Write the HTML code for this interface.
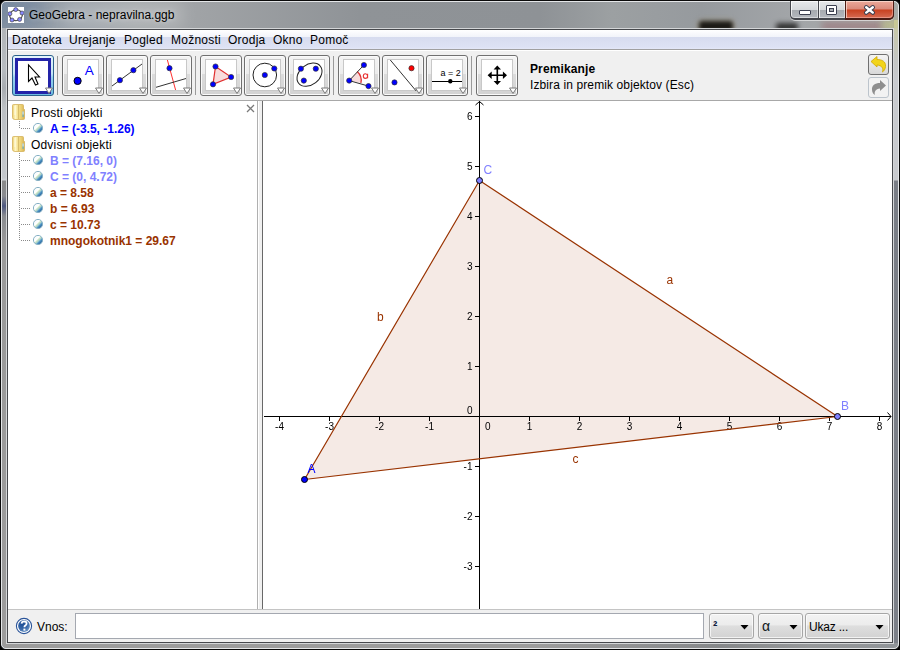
<!DOCTYPE html>
<html><head><meta charset="utf-8">
<style>
*{margin:0;padding:0;box-sizing:border-box}
html,body{width:900px;height:650px;overflow:hidden;background:#000}
body{position:relative;font-family:"Liberation Sans",sans-serif;font-size:12px;color:#000}
.a{position:absolute}
.mi{position:absolute;top:33px;white-space:pre;line-height:14px;color:#000;letter-spacing:.25px}
.t{position:absolute;white-space:pre;line-height:16px}
.btn{position:absolute;top:55px;width:42px;height:41px;border:1px solid #707070;border-radius:3px;
 background:linear-gradient(#f4f4f4 0,#ececec 45%,#dcdcdc 46%,#d2d2d2 100%);box-shadow:inset 0 0 0 1px #fafafa}
.btn svg{position:absolute;left:4px;top:3px}
.sep{position:absolute;top:56px;width:1px;height:39px;background:#9a9a9a}
.cb{position:absolute;top:613px;height:26px;border:1px solid #a6a6a6;border-radius:3px;background:linear-gradient(#f3f3f3 0,#ececec 45%,#dedede 50%,#d2d2d2 100%);box-shadow:inset 0 0 0 1px rgba(255,255,255,.7)}
.row{position:absolute;left:50px;font-weight:bold;white-space:pre;line-height:16px}
</style></head><body>
<!-- window frame -->
<div class="a" style="left:0;top:0;width:900px;height:650px;background:linear-gradient(90deg,#8c98a6 0,#a4a8ab 15%,#a0a3a6 22%,#8f9397 40%,#8e9296 60%,#9ca0a2 68%,#969a9e 78%,#a2a5a8 88%,#a8aaa6 100%);border:1px solid #0a0a0a;border-radius:6px 6px 6px 6px"></div>
<div class="a" style="left:2px;top:28px;width:4px;height:616px;background:linear-gradient(#b0b4b8 0,#b8bcc0 40px,#a8acb0 60px,#bcc0c4 80px,#c4c8cc 150px,#d0d4d8 152px,#8a8a8a 153px,#8a8c90 168px,#4e5880 178px,#8a8c90 188px,#9a9a9a 215px,#9c9c9c 100%)"></div>
<div class="a" style="left:894px;top:20px;width:4px;height:624px;background:linear-gradient(#c8c8a0 0,#c4c6c4 40px,#c8cace 60px,#c8cace 160px,#7a7e86 161px,#7c8088 100%)"></div>
<div class="a" style="left:2px;top:643px;width:896px;height:5px;background:linear-gradient(90deg,#9c9c9c 0,#9c9c9c 60%,#86888a 80%,#96989a 90%,#909498 100%);border-radius:0 0 4px 4px"></div>
<div class="a" style="left:1px;top:1px;width:898px;height:648px;border:1px solid #e4e6e8;border-radius:5px"></div>
<div class="a" style="left:6px;top:28px;width:888px;height:616px;border:1px solid #d4d6d8"></div>
<div class="a" style="left:7px;top:29px;width:886px;height:614px;border:1px solid #46484c;background:#f0f0f0"></div>
<!-- title bar -->
<div class="a" style="left:2px;top:2px;width:896px;height:26px;overflow:hidden;border-radius:4px 4px 0 0">
 <div class="a" style="left:-20px;top:-10px;width:60px;height:36px;background:rgba(90,115,150,.35);filter:blur(8px)"></div>
 <div class="a" style="left:60px;top:2px;width:120px;height:22px;background:rgba(255,255,255,.22);filter:blur(8px)"></div>
 <div class="a" style="left:697px;top:19px;width:34px;height:10px;background:#1c1a16;border-radius:3px;filter:blur(2.2px);box-shadow:0 0 3px 1px rgba(180,150,90,.5)"></div>
 <div class="a" style="left:774px;top:21px;width:22px;height:8px;background:#303030;border-radius:3px;filter:blur(2.5px)"></div>
 <div class="a" style="left:820px;top:20px;width:60px;height:9px;background:rgba(150,90,100,.45);filter:blur(3px)"></div>
 <div class="a" style="left:880px;top:18px;width:16px;height:10px;background:rgba(200,200,120,.5);filter:blur(3px)"></div>
</div>
<div class="a" style="left:8px;top:7px;width:16px;height:16px;background:#fff"></div>
<svg class="a" style="left:8px;top:7px" width="16" height="16" viewBox="0 0 16 16">
 <ellipse cx="8" cy="8.2" rx="6.4" ry="5.4" fill="none" stroke="#555" stroke-width="1.2" transform="rotate(-10 8 8)"/>
 <g fill="#8888ff" stroke="#333" stroke-width=".6">
 <circle cx="7.7" cy="2.6" r="2"/><circle cx="14" cy="6" r="2"/><circle cx="11.6" cy="12.4" r="2"/><circle cx="4" cy="13" r="2"/><circle cx="1.9" cy="6.8" r="2"/></g>
</svg>
<span class="a" style="left:29px;top:8px;line-height:14px;font-size:12px;color:#000;white-space:pre;text-shadow:0 0 5px rgba(255,255,255,.5)">GeoGebra - nepravilna.ggb</span>
<!-- window buttons -->
<div class="a" style="left:790px;top:1px;width:104px;height:19px;background:#44464c;border-radius:0 0 5px 5px;box-shadow:0 1px 0 rgba(255,255,255,.55)"></div>
<div class="a" style="left:791px;top:1px;width:27px;height:17px;border-radius:0 0 0 4px;background:linear-gradient(#e6e8ea 0,#d6d9dc 50%,#a6aaaf 53%,#b4b8be 100%);box-shadow:inset 1px 1px 0 rgba(255,255,255,.75),inset -1px -1px 0 rgba(255,255,255,.45)"></div>
<div class="a" style="left:819px;top:1px;width:26px;height:17px;background:linear-gradient(#e6e8ea 0,#d6d9dc 50%,#a6aaaf 53%,#b4b8be 100%);box-shadow:inset 1px 1px 0 rgba(255,255,255,.75),inset -1px -1px 0 rgba(255,255,255,.45)"></div>
<div class="a" style="left:845px;top:1px;width:49px;height:19px;background:#4c1c14;border-radius:0 0 5px 0"></div>
<div class="a" style="left:846px;top:1px;width:47px;height:17px;border-radius:0 0 4px 0;background:linear-gradient(#eca99a 0,#da8a7a 48%,#c8401f 52%,#d66a52 100%);box-shadow:inset 1px 1px 0 rgba(255,230,220,.7),inset -1px -1px 0 rgba(255,200,190,.45)"></div>
<div class="a" style="left:790px;top:0;width:104px;height:1px;background:#101010"></div>
<div class="a" style="left:799px;top:10px;width:12px;height:5px;background:#fff;border:1px solid #3c4050;border-radius:1px"></div>
<div class="a" style="left:826px;top:5px;width:11px;height:10px;background:#fff;border:1px solid #3c4050;border-radius:1px"></div>
<div class="a" style="left:829px;top:8px;width:5px;height:4px;background:#a8acb0;border:1px solid #3c4050"></div>
<svg class="a" style="left:862px;top:3px" width="15" height="13" viewBox="0 0 15 13">
 <path d="M4.2 4.3 L10.8 9.6 M10.8 4.3 L4.2 9.6" stroke="#3a3f50" stroke-width="4.4" stroke-linecap="round"/>
 <path d="M4.2 4.3 L10.8 9.6 M10.8 4.3 L4.2 9.6" stroke="#fff" stroke-width="2.4" stroke-linecap="round"/>
</svg>

<!-- client: menubar -->
<div class="a" style="left:8px;top:30px;width:884px;height:19px;background:linear-gradient(#ffffff 0,#f2f4fa 35%,#d7dcef 38%,#dde2f4 90%,#e4e8f8 100%)"></div>
<span class="mi" style="left:12px">Datoteka</span>
<span class="mi" style="left:69px">Urejanje</span>
<span class="mi" style="left:124px">Pogled</span>
<span class="mi" style="left:171px">Možnosti</span>
<span class="mi" style="left:228px">Orodja</span>
<span class="mi" style="left:273px">Okno</span>
<span class="mi" style="left:310px">Pomoč</span>
<div class="a" style="left:8px;top:49px;width:884px;height:1px;background:#a0a0a0"></div>
<div class="a" style="left:8px;top:50px;width:884px;height:1px;background:#fff"></div>


<!-- toolbar -->
<div class="a" style="left:12px;top:55px;width:42px;height:41px;border:1px solid #2c628b;border-radius:3px;background:linear-gradient(#e5f4fc 0,#c4e5f6 45%,#98d1ef 55%,#6cbbe0 100%)"></div>
<div class="a" style="left:15px;top:58px;width:36px;height:36px;border:3px solid #2323a8;background:#fff"></div>
<svg class="a" style="left:17px;top:59px" width="32" height="32" viewBox="0 0 32 32">
 <path d="M11.5 6 L11.5 22.5 L15 19 L18.5 26 L21 25 L18 18 L22.5 18 Z" fill="#fff" stroke="#000" stroke-width="1.1" stroke-linejoin="miter"/>
</svg>
<div class="sep" style="left:57px"></div>
<div class="btn" style="left:62px"><svg width="32" height="32" viewBox="0 0 32 32"><rect x=".5" y=".5" width="31" height="31" fill="#fff" stroke="#c8c8c8"/>
 <circle cx="10.6" cy="21.9" r="3.6" fill="#0000ff" stroke="#000" stroke-width="1"/>
 <text x="17.8" y="16.3" font-family="Liberation Sans" font-size="13.5" fill="#0000ff">A</text></svg></div>
<div class="btn" style="left:106px"><svg width="32" height="32" viewBox="0 0 32 32"><rect x=".5" y=".5" width="31" height="31" fill="#fff" stroke="#c8c8c8"/>
 <path d="M1 27 L31 5" stroke="#333" stroke-width="1"/>
 <circle cx="8.9" cy="21.2" r="2.6" fill="#0000ff" stroke="#333" stroke-width=".7"/><circle cx="22.4" cy="11.2" r="2.6" fill="#0000ff" stroke="#333" stroke-width=".7"/></svg></div>
<div class="btn" style="left:150px"><svg width="32" height="32" viewBox="0 0 32 32"><rect x=".5" y=".5" width="31" height="31" fill="#fff" stroke="#c8c8c8"/>
 <path d="M12.4 1 L20.6 31" stroke="#ff3030" stroke-width="1"/><path d="M1 28.3 L31 19.5" stroke="#333" stroke-width="1"/>
 <circle cx="14.5" cy="9.2" r="2.6" fill="#0000ff" stroke="#333" stroke-width=".7"/></svg></div>
<div class="sep" style="left:195px"></div>
<div class="btn" style="left:200px"><svg width="32" height="32" viewBox="0 0 32 32"><rect x=".5" y=".5" width="31" height="31" fill="#fff" stroke="#c8c8c8"/>
 <path d="M10.5 7.5 L26.1 18 L8 25.3 Z" fill="#f8dcdc" stroke="#e03030" stroke-width="1.2"/>
 <circle cx="10.5" cy="7.5" r="2.6" fill="#0000ff" stroke="#333" stroke-width=".7"/><circle cx="26.1" cy="18" r="2.6" fill="#0000ff" stroke="#333" stroke-width=".7"/><circle cx="8" cy="25.3" r="2.6" fill="#0000ff" stroke="#333" stroke-width=".7"/></svg></div>
<div class="btn" style="left:244px"><svg width="32" height="32" viewBox="0 0 32 32"><rect x=".5" y=".5" width="31" height="31" fill="#fff" stroke="#c8c8c8"/>
 <circle cx="15.8" cy="16" r="11.8" fill="none" stroke="#222" stroke-width="1"/>
 <circle cx="15.8" cy="16" r="2.6" fill="#0000ff" stroke="#333" stroke-width=".7"/><circle cx="25.3" cy="9.5" r="2.6" fill="#0000ff" stroke="#333" stroke-width=".7"/></svg></div>
<div class="btn" style="left:288px"><svg width="32" height="32" viewBox="0 0 32 32"><rect x=".5" y=".5" width="31" height="31" fill="#fff" stroke="#c8c8c8"/>
 <ellipse cx="16.5" cy="15.7" rx="13.8" ry="10" fill="none" stroke="#222" stroke-width="1" transform="rotate(-38 16.5 15.7)"/>
 <circle cx="7.9" cy="9.7" r="2.6" fill="#0000ff" stroke="#333" stroke-width=".7"/><circle cx="22.8" cy="9.7" r="2.6" fill="#0000ff" stroke="#333" stroke-width=".7"/><circle cx="10.8" cy="21.6" r="2.6" fill="#0000ff" stroke="#333" stroke-width=".7"/></svg></div>
<div class="sep" style="left:333px"></div>
<div class="btn" style="left:338px"><svg width="32" height="32" viewBox="0 0 32 32"><rect x=".5" y=".5" width="31" height="31" fill="#fff" stroke="#c8c8c8"/>
 <path d="M6.2 21.6 L14.2 12.4 A12 12 0 0 1 17.9 23.9 Z" fill="#f8dcdc"/>
 <path d="M14.2 12.4 A12 12 0 0 1 17.9 23.9" fill="none" stroke="#e03030" stroke-width="1.3"/>
 <path d="M20.9 6 L6.2 21.6 L25.5 27.1" fill="none" stroke="#333" stroke-width="1"/>
 <path d="M24.6 14.8 L24.6 19.3 M24.6 16.9 C24.4 15.3 23.6 14.7 22.4 14.7 C21 14.7 20.3 15.8 20.3 17.1 C20.3 18.4 21 19.4 22.3 19.4 C23.6 19.4 24.4 18.6 24.6 17.3" fill="none" stroke="#e83030" stroke-width="1.1"/>
 <circle cx="20.9" cy="6" r="2.6" fill="#0000ff" stroke="#333" stroke-width=".7"/><circle cx="6.2" cy="21.6" r="2.6" fill="#0000ff" stroke="#333" stroke-width=".7"/><circle cx="25.5" cy="27.1" r="2.6" fill="#0000ff" stroke="#333" stroke-width=".7"/></svg></div>
<div class="btn" style="left:382px"><svg width="32" height="32" viewBox="0 0 32 32"><rect x=".5" y=".5" width="31" height="31" fill="#fff" stroke="#c8c8c8"/>
 <path d="M3.3 1 L29.2 32" stroke="#333" stroke-width="1"/>
 <circle cx="24.5" cy="9.2" r="2.6" fill="#ff0000" stroke="#333" stroke-width=".7"/><circle cx="7.5" cy="23.4" r="2.6" fill="#0000ff" stroke="#333" stroke-width=".7"/></svg></div>
<div class="btn" style="left:426px"><svg width="32" height="32" viewBox="0 0 32 32"><rect x=".5" y=".5" width="31" height="31" fill="#fff" stroke="#c8c8c8"/>
 <text x="9.6" y="17" font-family="Liberation Sans" font-size="9" fill="#000">a = 2</text>
 <path d="M1 22.5 L31 22.5" stroke="#000" stroke-width="1"/><circle cx="19.3" cy="22.3" r="2.2" fill="#000"/></svg></div>
<div class="sep" style="left:471px"></div>
<div class="btn" style="left:476px"><svg width="32" height="32" viewBox="0 0 32 32"><rect x=".5" y=".5" width="31" height="31" fill="#fff" stroke="#c8c8c8"/>
 <path d="M16.3 9 L16.3 23.6 M9 16.3 L23.6 16.3" stroke="#000" stroke-width="1.6"/>
 <path d="M16.3 6.5 L12.6 10.6 L20 10.6 Z M16.3 26 L12.6 21.9 L20 21.9 Z M6.6 16.3 L10.7 12.6 L10.7 20 Z M26 16.3 L21.9 12.6 L21.9 20 Z" fill="#000"/></svg></div>
<svg class="a" style="left:45px;top:87px" width="9" height="8" viewBox="0 0 9 8"><path d="M.5 1 L7.5 1 L4 6.5 Z" fill="#fff" stroke="#7a7a7a" stroke-width="1"/></svg><svg class="a" style="left:95px;top:87px" width="9" height="8" viewBox="0 0 9 8"><path d="M.5 1 L7.5 1 L4 6.5 Z" fill="#fff" stroke="#7a7a7a" stroke-width="1"/></svg><svg class="a" style="left:139px;top:87px" width="9" height="8" viewBox="0 0 9 8"><path d="M.5 1 L7.5 1 L4 6.5 Z" fill="#fff" stroke="#7a7a7a" stroke-width="1"/></svg><svg class="a" style="left:183px;top:87px" width="9" height="8" viewBox="0 0 9 8"><path d="M.5 1 L7.5 1 L4 6.5 Z" fill="#fff" stroke="#7a7a7a" stroke-width="1"/></svg><svg class="a" style="left:233px;top:87px" width="9" height="8" viewBox="0 0 9 8"><path d="M.5 1 L7.5 1 L4 6.5 Z" fill="#fff" stroke="#7a7a7a" stroke-width="1"/></svg><svg class="a" style="left:277px;top:87px" width="9" height="8" viewBox="0 0 9 8"><path d="M.5 1 L7.5 1 L4 6.5 Z" fill="#fff" stroke="#7a7a7a" stroke-width="1"/></svg><svg class="a" style="left:321px;top:87px" width="9" height="8" viewBox="0 0 9 8"><path d="M.5 1 L7.5 1 L4 6.5 Z" fill="#fff" stroke="#7a7a7a" stroke-width="1"/></svg><svg class="a" style="left:371px;top:87px" width="9" height="8" viewBox="0 0 9 8"><path d="M.5 1 L7.5 1 L4 6.5 Z" fill="#fff" stroke="#7a7a7a" stroke-width="1"/></svg><svg class="a" style="left:415px;top:87px" width="9" height="8" viewBox="0 0 9 8"><path d="M.5 1 L7.5 1 L4 6.5 Z" fill="#fff" stroke="#7a7a7a" stroke-width="1"/></svg><svg class="a" style="left:459px;top:87px" width="9" height="8" viewBox="0 0 9 8"><path d="M.5 1 L7.5 1 L4 6.5 Z" fill="#fff" stroke="#7a7a7a" stroke-width="1"/></svg><svg class="a" style="left:509px;top:87px" width="9" height="8" viewBox="0 0 9 8"><path d="M.5 1 L7.5 1 L4 6.5 Z" fill="#fff" stroke="#7a7a7a" stroke-width="1"/></svg>
<span class="t" style="left:530px;top:61px;font-weight:bold;letter-spacing:.12px">Premikanje</span>
<span class="t" style="left:530px;top:77px;letter-spacing:.11px">Izbira in premik objektov (Esc)</span>
<!-- undo/redo -->
<div class="a" style="left:868px;top:54px;width:21px;height:21px;border:1px solid #707070;border-radius:3px;background:linear-gradient(#f4f4f4,#d8d8d8)"></div>
<svg class="a" style="left:869px;top:55px" width="19" height="19" viewBox="0 0 19 19">
 <path d="M2 6.5 L8 1.5 L8 4.5 C13 4.5 17 6.5 16.5 11.5 C16.3 14 15 16 13.5 17 C14.5 14 13.5 10.5 8 10 L8 12 Z" fill="#f2d41a" stroke="#d0a800" stroke-width=".8"/></svg>
<div class="a" style="left:868px;top:77px;width:21px;height:21px;border:1px solid #bcc4cc;border-radius:3px;background:#f2f2f2"></div>
<svg class="a" style="left:869px;top:78px" width="19" height="19" viewBox="0 0 19 19">
 <path d="M17 7.5 L11 2 L11 5 C6 5 2.5 7.5 3 12 C3.2 14.5 4.5 16.5 6 17 C5 14 6.5 11 11 10.5 L11 13 Z" fill="#8e8e8e"/></svg>

<!-- toolbar area bottom line -->
<div class="a" style="left:8px;top:100px;width:884px;height:1px;background:#a8a8a8"></div>

<!-- algebra view -->
<div class="a" style="left:8px;top:101px;width:249px;height:508px;background:#fff"></div>
<div class="a" style="left:257px;top:101px;width:1px;height:508px;background:#b0b0b0"></div>
<div class="a" style="left:258px;top:101px;width:1px;height:508px;background:#fff"></div>
<div class="a" style="left:262px;top:101px;width:1px;height:508px;background:#686868"></div>

<svg width="0" height="0" style="position:absolute"><defs>
<linearGradient id="fold" x1="0" y1="0" x2="1" y2="0"><stop offset="0" stop-color="#ecd070"/><stop offset=".25" stop-color="#fff6c4"/><stop offset=".45" stop-color="#f4e08c"/><stop offset=".7" stop-color="#ecd277"/><stop offset="1" stop-color="#d8b050"/></linearGradient>
<linearGradient id="sph" x1=".1" y1=".1" x2=".9" y2=".9"><stop offset="0" stop-color="#f8fcfc"/><stop offset=".4" stop-color="#ffffff"/><stop offset=".46" stop-color="#d4ecc4"/><stop offset=".6" stop-color="#a4cccc"/><stop offset=".72" stop-color="#4a92c4"/><stop offset="1" stop-color="#1e4c8a"/></linearGradient>
</defs></svg>
<!-- algebra contents -->
<svg class="a" style="left:12px;top:104px" width="14" height="16" viewBox="0 0 14 16">
 <path d="M.5 1.5 Q.5 .5 1.5 .5 L10.5 .5 Q11.5 .5 11.5 1.5 L11.5 5 L12.5 5.5 L12.5 14.5 Q12.5 15.5 11.5 15.5 L3 15.5 Q.5 15.5 .5 13.5 Z" fill="url(#fold)" stroke="#d4b25c" stroke-width=".8"/>
 <path d="M6.5 1 L6.5 15" stroke="#d8bc6a" stroke-width="1"/><path d="M3 2 L3 11" stroke="#fffbe0" stroke-width="1"/>
 <rect x="10.6" y="7.5" width=".9" height="5.5" fill="#40a8e8"/><rect x="10.6" y="7.5" width=".9" height="3" fill="#f0f8ff"/></svg><svg class="a" style="left:12px;top:136px" width="14" height="16" viewBox="0 0 14 16">
 <path d="M.5 1.5 Q.5 .5 1.5 .5 L10.5 .5 Q11.5 .5 11.5 1.5 L11.5 5 L12.5 5.5 L12.5 14.5 Q12.5 15.5 11.5 15.5 L3 15.5 Q.5 15.5 .5 13.5 Z" fill="url(#fold)" stroke="#d4b25c" stroke-width=".8"/>
 <path d="M6.5 1 L6.5 15" stroke="#d8bc6a" stroke-width="1"/><path d="M3 2 L3 11" stroke="#fffbe0" stroke-width="1"/>
 <rect x="10.6" y="7.5" width=".9" height="5.5" fill="#40a8e8"/><rect x="10.6" y="7.5" width=".9" height="3" fill="#f0f8ff"/></svg><span class="t" style="left:31px;top:105px;letter-spacing:.2px">Prosti objekti</span>
<span class="t" style="left:31px;top:137px;letter-spacing:.18px">Odvisni objekti</span>
<svg class="a" style="left:245px;top:103px" width="10" height="10" viewBox="0 0 10 10"><path d="M2 2 L9 9 M9 2 L2 9" stroke="#7a7a7a" stroke-width="1.3"/></svg>
<svg class="a" style="left:8px;top:101px" width="40" height="160" viewBox="0 0 40 160"><g fill="#8a8a8a"><rect x="11" y="20" width="1" height="1"/><rect x="11" y="22" width="1" height="1"/><rect x="11" y="24" width="1" height="1"/><rect x="11" y="26" width="1" height="1"/><rect x="13" y="27" width="1" height="1"/><rect x="15" y="27" width="1" height="1"/><rect x="17" y="27" width="1" height="1"/><rect x="19" y="27" width="1" height="1"/><rect x="21" y="27" width="1" height="1"/><rect x="11" y="52" width="1" height="1"/><rect x="11" y="54" width="1" height="1"/><rect x="11" y="56" width="1" height="1"/><rect x="11" y="58" width="1" height="1"/><rect x="11" y="60" width="1" height="1"/><rect x="11" y="62" width="1" height="1"/><rect x="11" y="64" width="1" height="1"/><rect x="11" y="66" width="1" height="1"/><rect x="11" y="68" width="1" height="1"/><rect x="11" y="70" width="1" height="1"/><rect x="11" y="72" width="1" height="1"/><rect x="11" y="74" width="1" height="1"/><rect x="11" y="76" width="1" height="1"/><rect x="11" y="78" width="1" height="1"/><rect x="11" y="80" width="1" height="1"/><rect x="11" y="82" width="1" height="1"/><rect x="11" y="84" width="1" height="1"/><rect x="11" y="86" width="1" height="1"/><rect x="11" y="88" width="1" height="1"/><rect x="11" y="90" width="1" height="1"/><rect x="11" y="92" width="1" height="1"/><rect x="11" y="94" width="1" height="1"/><rect x="11" y="96" width="1" height="1"/><rect x="11" y="98" width="1" height="1"/><rect x="11" y="100" width="1" height="1"/><rect x="11" y="102" width="1" height="1"/><rect x="11" y="104" width="1" height="1"/><rect x="11" y="106" width="1" height="1"/><rect x="11" y="108" width="1" height="1"/><rect x="11" y="110" width="1" height="1"/><rect x="11" y="112" width="1" height="1"/><rect x="11" y="114" width="1" height="1"/><rect x="11" y="116" width="1" height="1"/><rect x="11" y="118" width="1" height="1"/><rect x="11" y="120" width="1" height="1"/><rect x="11" y="122" width="1" height="1"/><rect x="11" y="124" width="1" height="1"/><rect x="11" y="126" width="1" height="1"/><rect x="11" y="128" width="1" height="1"/><rect x="11" y="130" width="1" height="1"/><rect x="11" y="132" width="1" height="1"/><rect x="11" y="134" width="1" height="1"/><rect x="11" y="136" width="1" height="1"/><rect x="11" y="138" width="1" height="1"/><rect x="13" y="59" width="1" height="1"/><rect x="15" y="59" width="1" height="1"/><rect x="17" y="59" width="1" height="1"/><rect x="19" y="59" width="1" height="1"/><rect x="21" y="59" width="1" height="1"/><rect x="13" y="75" width="1" height="1"/><rect x="15" y="75" width="1" height="1"/><rect x="17" y="75" width="1" height="1"/><rect x="19" y="75" width="1" height="1"/><rect x="21" y="75" width="1" height="1"/><rect x="13" y="91" width="1" height="1"/><rect x="15" y="91" width="1" height="1"/><rect x="17" y="91" width="1" height="1"/><rect x="19" y="91" width="1" height="1"/><rect x="21" y="91" width="1" height="1"/><rect x="13" y="107" width="1" height="1"/><rect x="15" y="107" width="1" height="1"/><rect x="17" y="107" width="1" height="1"/><rect x="19" y="107" width="1" height="1"/><rect x="21" y="107" width="1" height="1"/><rect x="13" y="123" width="1" height="1"/><rect x="15" y="123" width="1" height="1"/><rect x="17" y="123" width="1" height="1"/><rect x="19" y="123" width="1" height="1"/><rect x="21" y="123" width="1" height="1"/><rect x="13" y="139" width="1" height="1"/><rect x="15" y="139" width="1" height="1"/><rect x="17" y="139" width="1" height="1"/><rect x="19" y="139" width="1" height="1"/><rect x="21" y="139" width="1" height="1"/></g></svg>
<svg class="a" style="left:33px;top:123px" width="10" height="10" viewBox="0 0 10 10"><circle cx="5" cy="5" r="4.6" fill="url(#sph)" stroke="#86b0c4" stroke-width="1"/></svg><span class="row" style="top:121px;color:#0000ff">A = (-3.5, -1.26)</span>
<svg class="a" style="left:33px;top:155px" width="10" height="10" viewBox="0 0 10 10"><circle cx="5" cy="5" r="4.6" fill="url(#sph)" stroke="#86b0c4" stroke-width="1"/></svg><span class="row" style="top:153px;color:#8080ff">B = (7.16, 0)</span>
<svg class="a" style="left:33px;top:171px" width="10" height="10" viewBox="0 0 10 10"><circle cx="5" cy="5" r="4.6" fill="url(#sph)" stroke="#86b0c4" stroke-width="1"/></svg><span class="row" style="top:169px;color:#8080ff">C = (0, 4.72)</span>
<svg class="a" style="left:33px;top:187px" width="10" height="10" viewBox="0 0 10 10"><circle cx="5" cy="5" r="4.6" fill="url(#sph)" stroke="#86b0c4" stroke-width="1"/></svg><span class="row" style="top:185px;color:#993300">a = 8.58</span>
<svg class="a" style="left:33px;top:203px" width="10" height="10" viewBox="0 0 10 10"><circle cx="5" cy="5" r="4.6" fill="url(#sph)" stroke="#86b0c4" stroke-width="1"/></svg><span class="row" style="top:201px;color:#993300">b = 6.93</span>
<svg class="a" style="left:33px;top:219px" width="10" height="10" viewBox="0 0 10 10"><circle cx="5" cy="5" r="4.6" fill="url(#sph)" stroke="#86b0c4" stroke-width="1"/></svg><span class="row" style="top:217px;color:#993300">c = 10.73</span>
<svg class="a" style="left:33px;top:235px" width="10" height="10" viewBox="0 0 10 10"><circle cx="5" cy="5" r="4.6" fill="url(#sph)" stroke="#86b0c4" stroke-width="1"/></svg><span class="row" style="top:233px;color:#993300">mnogokotnik1 = 29.67</span>

<!-- graphics view -->
<div class="a" style="left:263px;top:101px;width:629px;height:508px;background:#fff"></div>

<svg class="a" style="left:263px;top:101px;will-change:transform" width="629" height="508" viewBox="263 101 629 508" font-family="Liberation Sans">
<path d="M304.5 479.5 L837.5 416.5 L479.5 180.5 Z" fill="#993300" fill-opacity="0.1"/>
<g stroke="#000" stroke-width="1" fill="none">
<path d="M264 416.5 L891 416.5 M479.5 101 L479.5 609"/>
<path d="M887.5 412.5 L891 416.5 L887.5 420.5 M475.5 105 L479.5 101.5 L483.5 105"/>
<path d="M279.5 416.5 L279.5 421 M329.5 416.5 L329.5 421 M379.5 416.5 L379.5 421 M429.5 416.5 L429.5 421 M529.5 416.5 L529.5 421 M579.5 416.5 L579.5 421 M629.5 416.5 L629.5 421 M679.5 416.5 L679.5 421 M729.5 416.5 L729.5 421 M779.5 416.5 L779.5 421 M829.5 416.5 L829.5 421 M879.5 416.5 L879.5 421 M475 566.5 L479.5 566.5 M475 516.5 L479.5 516.5 M475 466.5 L479.5 466.5 M475 366.5 L479.5 366.5 M475 316.5 L479.5 316.5 M475 266.5 L479.5 266.5 M475 216.5 L479.5 216.5 M475 166.5 L479.5 166.5 M475 116.5 L479.5 116.5 "/>
</g>
<g font-size="10" fill="#000">
<text x="279.5" y="430" text-anchor="middle">-4</text>
<text x="329.5" y="430" text-anchor="middle">-3</text>
<text x="379.5" y="430" text-anchor="middle">-2</text>
<text x="429.5" y="430" text-anchor="middle">-1</text>
<text x="529.5" y="430" text-anchor="middle">1</text>
<text x="579.5" y="430" text-anchor="middle">2</text>
<text x="629.5" y="430" text-anchor="middle">3</text>
<text x="679.5" y="430" text-anchor="middle">4</text>
<text x="729.5" y="430" text-anchor="middle">5</text>
<text x="779.5" y="430" text-anchor="middle">6</text>
<text x="829.5" y="430" text-anchor="middle">7</text>
<text x="879.5" y="430" text-anchor="middle">8</text>
<text x="472.5" y="570" text-anchor="end">-3</text>
<text x="472.5" y="520" text-anchor="end">-2</text>
<text x="472.5" y="470" text-anchor="end">-1</text>
<text x="472.5" y="370" text-anchor="end">1</text>
<text x="472.5" y="320" text-anchor="end">2</text>
<text x="472.5" y="270" text-anchor="end">3</text>
<text x="472.5" y="220" text-anchor="end">4</text>
<text x="472.5" y="170" text-anchor="end">5</text>
<text x="472.5" y="120" text-anchor="end">6</text>
<text x="472.5" y="414" text-anchor="end">0</text>
<text x="485" y="430">0</text>
</g>
<g stroke="#993300" stroke-width="1.2" fill="none"><path d="M304.5 479.5 L837.5 416.5 M837.5 416.5 L479.5 180.5 M479.5 180.5 L304.5 479.5"/></g>
<circle cx="304.5" cy="479.5" r="3" fill="#0000ff" stroke="#000" stroke-width="1"/>
<circle cx="837.5" cy="416.5" r="3" fill="#8080ff" stroke="#000" stroke-width="1"/>
<circle cx="479.5" cy="180.5" r="3" fill="#8080ff" stroke="#000" stroke-width="1"/>
<g font-size="12">
<text x="307.5" y="473" fill="#0000ff">A</text>
<text x="841" y="410" fill="#8080ff">B</text>
<text x="483.5" y="174" fill="#8080ff">C</text>
<text x="666.5" y="284" fill="#993300">a</text>
<text x="377" y="321" fill="#993300">b</text>
<text x="572.5" y="463" fill="#993300">c</text>
</g></svg>
<!-- input bar -->
<div class="a" style="left:8px;top:609px;width:884px;height:1px;background:#c4c4c4"></div>


<svg class="a" style="left:15px;top:617px" width="18" height="18" viewBox="0 0 18 18">
 <defs><radialGradient id="hq" cx=".35" cy=".3" r=".8"><stop offset="0" stop-color="#1c4c94"/><stop offset=".6" stop-color="#3a6aaa"/><stop offset="1" stop-color="#7aa0cc"/></radialGradient></defs>
 <circle cx="9" cy="9" r="7.6" fill="#fff" stroke="#2a5499" stroke-width="1.1"/>
 <circle cx="9" cy="9" r="5.9" fill="url(#hq)"/>
 <path d="M6.6 6.6 Q6.8 4.3 9.2 4.3 Q11.6 4.4 11.6 6.4 Q11.6 7.6 10.3 8.4 Q9.4 9 9.4 10.3" fill="none" stroke="#fff" stroke-width="1.8"/>
 <rect x="8.4" y="11.6" width="2" height="2" fill="#fff"/>
</svg>
<span class="t" style="left:37px;top:619px">Vnos:</span>
<div class="a" style="left:75px;top:613px;width:629px;height:26px;background:#fff;border:1px solid #a4a8b0"></div>
<div class="cb" style="left:709px;width:45px"></div>
<div class="cb" style="left:758px;width:45px"></div>
<div class="cb" style="left:805px;width:85px"></div>
<span class="a" style="left:713px;top:619px;font-size:13px;font-weight:bold;line-height:14px;color:#102040">²</span>
<span class="a" style="left:762px;top:618px;font-size:14px;line-height:16px;color:#101820">α</span>
<span class="t" style="left:809px;top:619px;letter-spacing:-.2px">Ukaz ...</span>
<svg class="a" style="left:740px;top:625px" width="9" height="5" viewBox="0 0 9 5"><path d="M0.5 0 L8.5 0 L4.5 4.5 Z" fill="#000"/></svg>
<svg class="a" style="left:789px;top:625px" width="9" height="5" viewBox="0 0 9 5"><path d="M0.5 0 L8.5 0 L4.5 4.5 Z" fill="#000"/></svg>
<svg class="a" style="left:875px;top:625px" width="9" height="5" viewBox="0 0 9 5"><path d="M0.5 0 L8.5 0 L4.5 4.5 Z" fill="#000"/></svg>

</body></html>
